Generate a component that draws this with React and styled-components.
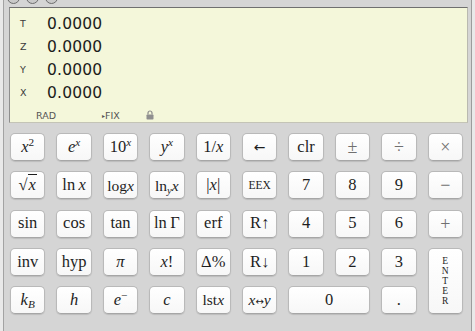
import React from 'react';
import styled, { createGlobalStyle } from 'styled-components';

const GlobalStyle = createGlobalStyle`
  html, body {
    margin: 0;
    padding: 0;
    background: #e9e9e9;
  }
  body {
    width: 475px;
    height: 331px;
    overflow: hidden;
  }
`;

const Window = styled.div`
  margin-left: 3px;
  width: 467px;
  height: 331px;
  background: #d5d5d5;
  border-left: 1px solid #a3a3a3;
  border-right: 1px solid #9c9c9c;
  display: flex;
  flex-direction: column;
`;

const TitleBar = styled.div`
  height: 7px;
  overflow: hidden;
  display: flex;
  gap: 6px;
  padding-left: 3px;
`;

const Light = styled.div`
  width: 11px;
  height: 11px;
  margin-top: -9px;
  border-radius: 50%;
  border: 1px solid #6d6d6d;
  background: #c9c9c9;
`;

const Display = styled.div`
  margin: 0 3px 0 5px;
  height: 110px;
  background: #f4f7da;
  border-top: 1px solid #6f6f6f;
  border-left: 1px solid #8e8e8e;
  border-right: 1px solid #b9b9b0;
  border-bottom: 1px solid #c4c4b6;
  padding-top: 4px;
  box-sizing: content-box;
  font-family: "DejaVu Sans", "Liberation Sans", sans-serif;
`;

const StackRow = styled.div`
  height: 23px;
  display: flex;
  align-items: center;
`;

const RegLabel = styled.span`
  width: 37px;
  padding-left: 10px;
  box-sizing: border-box;
  font-size: 9.5px;
  color: #3a3a3a;
`;

const RegValue = styled.span`
  font-size: 15.5px;
  color: #1c1c1c;
  letter-spacing: 0.2px;
`;

const StatusRow = styled.div`
  margin-top: 4px;
  height: 14px;
  display: flex;
  align-items: center;
  padding-left: 26px;
  font-size: 9.5px;
  color: #555;
`;

const StatusCell = styled.span`
  width: ${p => p.w}px;
  display: flex;
  align-items: center;
`;

const Pad = styled.div`
  margin-top: 10px;
  padding-left: 6px;
  display: grid;
  grid-template-columns: repeat(10, 35.4px);
  grid-auto-rows: 28px;
  column-gap: 11px;
  row-gap: 10.3px;
`;

const Key = styled.button`
  grid-column: span ${p => p.cols || 1};
  grid-row: span ${p => p.rows || 1};
  margin: 0;
  padding: 0;
  background: linear-gradient(#ffffff, #f7f7f7);
  border: 1px solid #b9b9b9;
  border-bottom-color: #a6a6a6;
  border-radius: 5px;
  box-shadow: 0 1px 1px rgba(0, 0, 0, 0.12);
  font-family: "Liberation Serif", "DejaVu Serif", serif;
  font-size: ${p => p.size || 16.5}px;
  color: ${p => (p.light ? '#707070' : '#1e1e1e')};
  display: flex;
  align-items: center;
  justify-content: center;
  line-height: 1;
  white-space: nowrap;
`;

const KeyText = styled.span`
  display: inline-block;
  line-height: 1;
`;

const V = styled.i`
  font-style: italic;
`;

const Sup = styled.sup`
  font-size: 0.68em;
  vertical-align: 0.5em;
  line-height: 0;
`;

const Sub = styled.sub`
  font-size: 0.68em;
  vertical-align: -0.3em;
  line-height: 0;
`;

const Root = styled.span`
  font-style: italic;
  border-top: 1px solid #1e1e1e;
  padding: 0 1px;
`;

const Arrow = styled.span`
  font-family: "DejaVu Sans", sans-serif;
  font-size: ${p => p.size || 11}px;
`;

const EnterText = styled.span`
  display: flex;
  flex-direction: column;
  align-items: center;
  font-size: 9.5px;
  line-height: 10px;
`;

const Lock = () => (
  <svg width="8" height="10" viewBox="0 0 8 10">
    <path d="M2 4.5V3a2 2 0 0 1 4 0v1.5" fill="none" stroke="#8a8a8a" strokeWidth="1.2" />
    <rect x="0.5" y="4.5" width="7" height="5" rx="0.8" fill="#8f8f8f" />
  </svg>
);

const stack = ['T', 'Z', 'Y', 'X'];

const keys = [
  { k: 'sq', label: <><V>x</V><Sup>2</Sup></> },
  { k: 'exp', label: <><V>e</V><Sup><V>x</V></Sup></> },
  { k: 'tenx', label: <>10<Sup><V>x</V></Sup></> },
  { k: 'pow', label: <><V>y</V><Sup><V>x</V></Sup></> },
  { k: 'inv', label: <>1/<V>x</V></> },
  { k: 'back', label: <Arrow size={14}>←</Arrow> },
  { k: 'clr', label: 'clr' },
  { k: 'chs', label: '±', light: true, size: 18 },
  { k: 'div', label: '÷', light: true, size: 18 },
  { k: 'mul', label: '×', light: true, size: 18 },

  { k: 'sqrt', label: <>√<Root>x</Root></> },
  { k: 'ln', label: <>ln&thinsp;<V>x</V></> },
  { k: 'log', label: <>log<V>x</V></>, size: 15.5 },
  { k: 'lny', label: <>ln<Sub><V>y</V></Sub><V>x</V></>, size: 15.5 },
  { k: 'abs', label: <>|<V>x</V>|</> },
  { k: 'eex', label: 'EEX', size: 11.5 },
  { k: '7', label: '7' },
  { k: '8', label: '8' },
  { k: '9', label: '9' },
  { k: 'sub', label: '−', light: true, size: 18 },

  { k: 'sin', label: 'sin' },
  { k: 'cos', label: 'cos' },
  { k: 'tan', label: 'tan' },
  { k: 'lngam', label: <>ln&thinsp;Γ</> },
  { k: 'erf', label: 'erf' },
  { k: 'rup', label: 'R↑' },
  { k: '4', label: '4' },
  { k: '5', label: '5' },
  { k: '6', label: '6' },
  { k: 'add', label: '+', light: true, size: 18 },

  { k: 'inv2', label: 'inv' },
  { k: 'hyp', label: 'hyp' },
  { k: 'pi', label: <V>π</V> },
  { k: 'fact', label: <><V>x</V>!</> },
  { k: 'pct', label: 'Δ%' },
  { k: 'rdn', label: 'R↓' },
  { k: '1', label: '1' },
  { k: '2', label: '2' },
  { k: '3', label: '3' },
  { k: 'enter', rows: 2, label: <EnterText>{'ENTER'.split('').map((c, i) => <span key={i}>{c}</span>)}</EnterText> },

  { k: 'kb', label: <><V>k</V><Sub><V>B</V></Sub></> },
  { k: 'h', label: <V>h</V> },
  { k: 'em', label: <><V>e</V><Sup>−</Sup></> },
  { k: 'c', label: <V>c</V> },
  { k: 'lst', label: <>lst<V>x</V></>, size: 15.5 },
  { k: 'swap', label: <><V>x</V><Arrow size={10}>↔</Arrow><V>y</V></>, size: 15.5 },
  { k: '0', label: '0', cols: 2 },
  { k: 'dot', label: '.' },
];

export default function App() {
  return (
    <>
      <GlobalStyle />
      <Window>
        <TitleBar>
          <Light />
          <Light />
          <Light />
        </TitleBar>
        <Display>
          {stack.map(r => (
            <StackRow key={r}>
              <RegLabel>{r}</RegLabel>
              <RegValue>0.0000</RegValue>
            </StackRow>
          ))}
          <StatusRow>
            <StatusCell w={66}>RAD</StatusCell>
            <StatusCell w={44}><span style={{ fontSize: 6 }}>▸</span>FIX</StatusCell>
            <StatusCell w={10}><Lock /></StatusCell>
          </StatusRow>
        </Display>
        <Pad>
          {keys.map(({ k, label, ...rest }) => (
            <Key key={k} {...rest}><KeyText>{label}</KeyText></Key>
          ))}
        </Pad>
      </Window>
    </>
  );
}
